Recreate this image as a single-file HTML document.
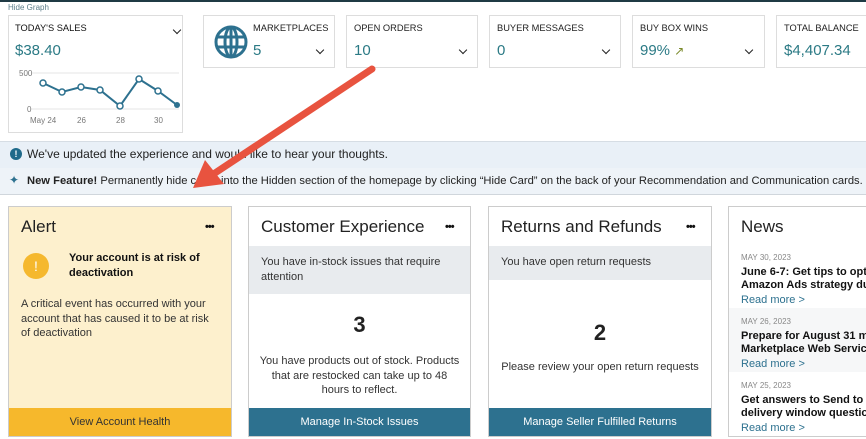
<!DOCTYPE html><html><head><style>
body{margin:0;width:866px;height:439px;overflow:hidden;background:#fff;font-family:"Liberation Sans",sans-serif;color:#111;position:relative}
.a{position:absolute}
.k{position:absolute;top:15px;height:53px;border:1px solid #ddd;background:#fff;box-sizing:border-box}
.k .t{position:absolute;left:7px;top:7px;font-size:9.3px;color:#222}
.k .v{position:absolute;left:7px;top:26px;font-size:15px;color:#2b7a85}
.chev{position:absolute;width:5px;height:5px;border-right:1.6px solid #222;border-bottom:1.6px solid #222;transform:rotate(45deg)}
.card{position:absolute;top:206px;height:231px;border:1px solid #ccc;box-sizing:border-box;background:#fff;overflow:hidden}
.card h2{position:absolute;left:12px;top:10px;margin:0;font-weight:normal;font-size:17px;color:#222}
.dots{position:absolute;top:14px;font-weight:bold;font-size:11px;letter-spacing:-1px}
.btn{position:absolute;left:0;right:0;bottom:0;height:28px;line-height:28px;text-align:center;font-size:11px;color:#fff;background:#2d718f}
.band{position:absolute;left:0;right:0;top:39px;background:#e8ebee;font-size:11px;color:#333;padding:9px 12px;box-sizing:border-box;line-height:15px}
.n{font-size:11px}
</style></head><body>
<div class="a" style="left:0;top:0;width:866px;height:2px;background:#1f3a44"></div>
<div class="a" style="left:8px;top:3px;font-size:8px;color:#5b7d8a">Hide Graph</div>
<div class="a" style="left:8px;top:15px;width:175px;height:118px;border:1px solid #ddd;box-sizing:border-box">
<div class="a" style="left:6px;top:7px;font-size:9.3px">TODAY'S SALES</div>
<div class="chev" style="left:165px;top:11px"></div>
<div class="a" style="left:6px;top:26px;font-size:15px;color:#2b7a85">$38.40</div>
<svg class="a" style="left:0;top:50px" width="175" height="68"><line x1="22" y1="7" x2="170" y2="7" stroke="#e5e5e5"/><line x1="22" y1="43" x2="170" y2="43" stroke="#e5e5e5"/>
<text x="10" y="10" font-size="8" fill="#777" font-family="Liberation Sans">500</text><text x="18" y="46" font-size="8" fill="#777" font-family="Liberation Sans">0</text>
<g font-size="8" fill="#777" font-family="Liberation Sans"><text x="21" y="57">May 24</text><text x="68" y="57">26</text><text x="107" y="57">28</text><text x="145" y="57">30</text></g>
<polyline points="34,17 53,26 72,21 91,24 111,40 130,13 149,25 168,39" fill="none" stroke="#2d718f" stroke-width="2"/>
<g fill="#fff" stroke="#2d718f" stroke-width="1.5"><circle cx="34" cy="17" r="3"/><circle cx="53" cy="26" r="3"/><circle cx="72" cy="21" r="3"/><circle cx="91" cy="24" r="3"/><circle cx="111" cy="40" r="3"/><circle cx="130" cy="13" r="3"/><circle cx="149" cy="25" r="3"/></g><circle cx="168" cy="39" r="3" fill="#2d718f"/></svg></div>
<div class="k" style="left:203px;width:132px"><svg class="a" style="left:9px;top:8px" width="36" height="36" viewBox="0 0 36 36"><g fill="none" stroke="#2d718f" stroke-width="3"><circle cx="18" cy="18" r="15"/><ellipse cx="18" cy="18" rx="6" ry="15"/><line x1="3" y1="13" x2="33" y2="13"/><line x1="3" y1="23" x2="33" y2="23"/><line x1="18" y1="3" x2="18" y2="33"/></g></svg><div class="t" style="left:49px">MARKETPLACES</div><div class="v" style="left:49px">5</div><div class="chev" style="left:113px;top:31px"></div></div>
<div class="k" style="left:346px;width:132px"><div class="t">OPEN ORDERS</div><div class="v">10</div><div class="chev" style="left:113px;top:31px"></div></div>
<div class="k" style="left:489px;width:132px"><div class="t">BUYER MESSAGES</div><div class="v">0</div><div class="chev" style="left:113px;top:31px"></div></div>
<div class="k" style="left:632px;width:133px"><div class="t">BUY BOX WINS</div><div class="v">99% <span style="color:#7a8a2a;font-size:12px">↗</span></div><div class="chev" style="left:113px;top:31px"></div></div>
<div class="k" style="left:776px;width:100px"><div class="t">TOTAL BALANCE</div><div class="v">$4,407.34</div></div>
<div class="a" style="left:0;top:141px;width:866px;height:26px;background:#e9f0f7;border-top:1px solid #d6dde4;border-bottom:1px solid #d0d6dc"></div>
<div class="a" style="left:10px;top:148px;width:12px;height:12px;border-radius:50%;background:#1f6a8a;color:#fff;font-size:9px;text-align:center;line-height:12px;font-weight:bold">!</div>
<div class="a" style="left:27px;top:147px;font-size:12px;color:#222">We've updated the experience and would like to hear your thoughts.</div>
<div class="a" style="left:0;top:168px;width:866px;height:26px;background:#eef3f8;border-bottom:1px solid #d0d6dc"></div>
<div class="a" style="left:9px;top:173px;font-size:12px;color:#2d718f">✦</div>
<div class="a" style="left:27px;top:175px;font-size:11.2px;color:#222;white-space:nowrap"><b>New Feature!</b> Permanently hide cards into the Hidden section of the homepage by clicking “Hide Card” on the back of your Recommendation and Communication cards.</div>
<div class="card" style="left:8px;width:224px;background:#fdf0cd"><h2>Alert</h2><div class="dots" style="left:196px">•••</div>
<div class="a" style="left:14px;top:46px;width:26px;height:26px;border-radius:50%;background:#f5b82e;color:#fff;text-align:center;line-height:26px;font-size:14px">!</div>
<div class="a" style="left:60px;top:44px;font-size:11px;font-weight:bold;line-height:15px;width:150px">Your account is at risk of deactivation</div>
<div class="a" style="left:12px;top:90px;font-size:11px;line-height:14.5px;width:196px;color:#333">A critical event has occurred with your account that has caused it to be at risk of deactivation</div>
<div class="btn" style="background:#f6b82c;color:#333">View Account Health</div></div>
<div class="card" style="left:248px;width:223px"><h2>Customer Experience</h2><div class="dots" style="left:196px">•••</div>
<div class="band" style="height:48px">You have in-stock issues that require attention</div>
<div class="a" style="left:0;right:0;top:105px;text-align:center;font-size:22px;font-weight:bold;color:#222">3</div>
<div class="a" style="left:10px;right:10px;top:147px;text-align:center;font-size:11px;line-height:14.5px;color:#333">You have products out of stock. Products that are restocked can take up to 48 hours to reflect.</div>
<div class="btn">Manage In-Stock Issues</div></div>
<div class="card" style="left:488px;width:224px"><h2>Returns and Refunds</h2><div class="dots" style="left:197px">•••</div>
<div class="band" style="height:34px">You have open return requests</div>
<div class="a" style="left:0;right:0;top:113px;text-align:center;font-size:22px;font-weight:bold;color:#222">2</div>
<div class="a" style="left:0;right:0;top:154px;text-align:center;font-size:11px;color:#333">Please review your open return requests</div>
<div class="btn">Manage Seller Fulfilled Returns</div></div>
<div class="card" style="left:728px;width:150px"><h2>News</h2>
<div class="a" style="left:0;right:0;top:101px;height:64px;background:#f6f7f8"></div>
<div class="a" style="left:12px;top:44px;line-height:13px;white-space:nowrap"><div style="font-size:8px;color:#888">MAY 30, 2023</div><div class="n" style="font-weight:bold;margin-top:2px">June 6-7: Get tips to optimize<br>Amazon Ads strategy during</div><div class="n" style="color:#2d718f;margin-top:2px">Read more &gt;</div></div>
<div class="a" style="left:12px;top:108px;line-height:13px;white-space:nowrap"><div style="font-size:8px;color:#888">MAY 26, 2023</div><div class="n" style="font-weight:bold;margin-top:2px">Prepare for August 31 migration<br>Marketplace Web Service</div><div class="n" style="color:#2d718f;margin-top:2px">Read more &gt;</div></div>
<div class="a" style="left:12px;top:172px;line-height:13px;white-space:nowrap"><div style="font-size:8px;color:#888">MAY 25, 2023</div><div class="n" style="font-weight:bold;margin-top:2px">Get answers to Send to Amazon<br>delivery window questions</div><div class="n" style="color:#2d718f;margin-top:2px">Read more &gt;</div></div></div>
<svg class="a" style="left:0;top:0" width="866" height="439"><line x1="372" y1="69" x2="215" y2="173" stroke="#e8533f" stroke-width="7" stroke-linecap="round"/><polygon points="193,188 205,160 224,184" fill="#e8533f"/></svg>
</body></html>
